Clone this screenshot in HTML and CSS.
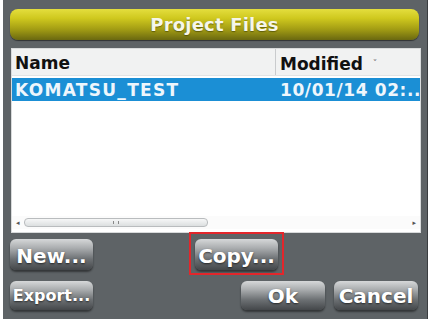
FILE: index.html
```html
<!DOCTYPE html>
<html>
<head>
<meta charset="utf-8">
<link rel="stylesheet" href="styles.css">
</head>
<body>
<div class="frame">
  <div class="title">Project Files</div>
  <div class="table">
    <div class="thead">
      <div class="col-name">Name</div>
      <div class="col-mod">Modified <span class="sort">&#709;</span></div>
    </div>
    <div class="row selected">
      <div class="col-name">KOMATSU_TEST</div>
      <div class="col-mod">10/01/14 02:..</div>
    </div>
    <div class="spacer"></div>
    <div class="hscroll">
      <span class="arrow">&#9666;</span>
      <div class="thumb"><span class="grip"></span></div>
      <span class="arrow right">&#9656;</span>
    </div>
  </div>
  <div class="btnrow first">
    <div class="btn new">New...</div>
    <div class="btn copy">Copy...</div>
  </div>
  <div class="btnrow second">
    <div class="btn export">Export...</div>
    <div class="btn ok">Ok</div>
    <div class="btn cancel">Cancel</div>
  </div>
</div>
</body>
</html>
```
FILE: styles.css
```css
html, body {
  margin: 0;
  padding: 0;
  background: #ffffff;
}
body {
  width: 433px;
  height: 326px;
  overflow: hidden;
  font-family: "DejaVu Sans", "Liberation Sans", sans-serif;
}
.frame {
  margin-left: 3px;
  width: 425px;
  height: 319px;
  box-sizing: border-box;
  background: #5e6366;
  border-right: 1px solid #3a3d40;
  padding: 9px 0 0 7px;
  display: flex;
  flex-direction: column;
}
.title {
  width: 409px;
  height: 31px;
  box-sizing: border-box;
  border-radius: 8px;
  background: linear-gradient(#e4de3e 0%, #cfc81e 30%, #a39d14 65%, #6a6810 100%);
  box-shadow: 0 1px 1px rgba(0,0,0,0.5);
  color: #f6f6ea;
  font-weight: bold;
  font-size: 18px;
  line-height: 30px;
  padding-top: 1px;
  text-align: center;
  letter-spacing: 0.2px;
  text-shadow: 0 1px 1px rgba(60,60,0,0.6);
}
.table {
  margin-top: 8px;
  margin-left: 1px;
  width: 410px;
  height: 185px;
  box-sizing: border-box;
  background: #ffffff;
  border: 1px solid #d8dadb;
  display: flex;
  flex-direction: column;
  overflow: hidden;
}
.thead {
  display: flex;
  height: 27px;
  box-sizing: border-box;
  background: #f1f2f2;
  border-bottom: 1px solid #e2e4e4;
  font-weight: bold;
  font-size: 17px;
  color: #111;
}
.thead > div {
  padding-top: 3px;
  line-height: 23px;
}
.col-name {
  width: 263px;
  padding-left: 3px;
  box-sizing: border-box;
  white-space: nowrap;
  overflow: hidden;
}
.col-mod {
  flex: 1;
  padding-left: 4px;
  white-space: nowrap;
  overflow: hidden;
}
.thead .col-mod {
  border-left: 1px solid #c9cbcd;
}
.sort {
  font-size: 9px;
  color: #888;
  vertical-align: 4px;
  margin-left: 4px;
}
.row {
  display: flex;
  margin-top: 2px;
  height: 23px;
  font-weight: bold;
  font-size: 17px;
  line-height: 22px;
  padding-top: 1px;
  box-sizing: border-box;
}
.row .col-name {
  letter-spacing: 1.3px;
}
.row .col-mod {
  padding-left: 5px;
  letter-spacing: 0.6px;
}
.selected {
  background: #1b8fd5;
  color: #eef6fc;
}
.spacer {
  flex: 1;
}
.hscroll {
  height: 13px;
  margin-bottom: 3px;
  display: flex;
  align-items: center;
  padding: 0 4px 0 4px;
  background: #fbfbfb;
}
.arrow {
  font-size: 7px;
  color: #555;
  width: 8px;
}
.arrow.right {
  margin-left: auto;
  text-align: right;
}
.thumb {
  width: 182px;
  height: 7px;
  border: 1px solid #b9bcbe;
  border-radius: 4px;
  background: linear-gradient(#f6f7f7, #dcdfe0);
  display: flex;
  justify-content: center;
  align-items: center;
}
.grip {
  width: 4px;
  height: 3px;
  border-left: 1px solid #888;
  border-right: 1px solid #888;
}
.btnrow {
  display: flex;
}
.btnrow.first {
  margin-top: 6px;
  height: 31px;
}
.btnrow.second {
  margin-top: 11px;
  height: 29px;
}
.btn {
  box-sizing: border-box;
  border-radius: 6px;
  background: linear-gradient(#d6d8d9 0%, #a9acae 30%, #6c7073 65%, #44474a 100%);
  box-shadow: 0 2px 2px rgba(0,0,0,0.45);
  color: #ffffff;
  font-weight: bold;
  font-size: 20px;
  text-align: center;
  text-shadow: 0 1px 2px rgba(0,0,0,0.6);
  white-space: nowrap;
}
.first .btn {
  width: 83px;
  height: 31px;
  padding-top: 3px;
  line-height: 28px;
}
.second .btn {
  height: 29px;
  padding-top: 1px;
  line-height: 28px;
}
.copy {
  margin-left: 102px;
  position: relative;
}
.copy::after {
  content: "";
  position: absolute;
  left: -6px;
  right: -6px;
  top: -7px;
  bottom: -5px;
  border: 2px solid #e3262b;
}
.export {
  width: 83px;
  font-size: 16px;
  padding-top: 2px;
}
.ok {
  margin-left: 148px;
  width: 84px;
}
.cancel {
  margin-left: 9px;
  width: 84px;
}
```
